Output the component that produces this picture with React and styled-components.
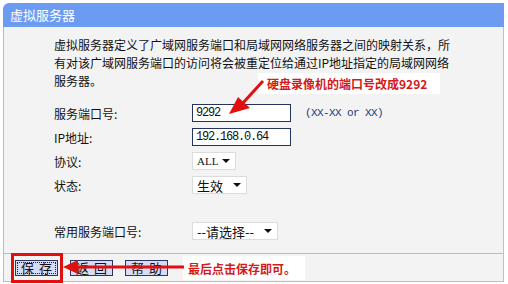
import React from 'react';
import styled, { createGlobalStyle } from 'styled-components';

const GlobalStyle = createGlobalStyle`
    html, body {
        margin: 0;
        background: #ffffff;
    }
    body {
        font-family: "Noto Sans CJK SC", "Noto Sans", sans-serif;
        color: #111;
    }
`;

const Page = styled.div`
    position: relative;
    width: 508px;
    height: 284px;
    padding: 3px 0 0 3px;
    box-sizing: border-box;
    overflow: hidden;
`;

const Frame = styled.div`
    width: 501px;
`;

const Header = styled.div`
    height: 24px;
    line-height: 24px;
    background: #6b9cf2;
    border-top-left-radius: 6px;
    color: #ffffff;
    font-size: 13px;
    padding-left: 7px;
`;

const Body = styled.div`
    background: #f3f3f4;
    border-left: 1px solid #eab85e;
    border-right: 1px solid #d9c27e;
    padding: 9px 0 10px 50px;
`;

const Intro = styled.div`
    font-size: 12px;
    line-height: 18px;
    margin-bottom: 11px;
    white-space: nowrap;
`;

const Row = styled.div`
    display: grid;
    grid-template-columns: 138px auto 1fr;
    align-items: center;
    height: 24px;
    margin-top: ${(props) => props.$gap ? '22px' : 0};
`;

const Label = styled.span`
    font-size: 12px;
`;

const TextInput = styled.div`
    width: 99px;
    height: 18px;
    box-sizing: border-box;
    border: 1px solid #23345f;
    background: #ffffff;
    font-family: "Liberation Mono", monospace;
    font-size: 12px;
    letter-spacing: -1.2px;
    line-height: 16px;
    padding-left: 3px;
`;

const Hint = styled.span`
    margin-left: 14px;
    font-family: "Liberation Mono", monospace;
    font-size: 11px;
    letter-spacing: -0.6px;
    color: #1f3a78;
`;

const Select = styled.div`
    width: ${(props) => props.$w}px;
    height: 18px;
    box-sizing: border-box;
    border: 1px solid #dcdcdc;
    background: #ffffff;
    display: flex;
    align-items: center;
    justify-content: space-between;
    padding: 0 5px 0 4px;
    font-size: ${(props) => props.$latin ? '11px' : '13px'};
    font-family: ${(props) => props.$latin ? '"Liberation Serif", serif' : '"Noto Sans CJK SC", sans-serif'};
`;

const Caret = styled.span`
    width: 0;
    height: 0;
    border-left: 4px solid transparent;
    border-right: 4px solid transparent;
    border-top: 4px solid #111;
`;

const Bar = styled.div`
    height: 27px;
    background: #f3f3f4;
    border: 1px solid #eab85e;
    border-right-color: #d9c27e;
    display: flex;
    align-items: center;
    gap: 12px;
    padding-left: 11px;
`;

const Button = styled.div`
    width: 43px;
    height: 16px;
    box-sizing: border-box;
    border: 1px solid #2a3566;
    background: #d6dcf6;
    font-size: 13px;
    line-height: 13px;
    text-align: center;
    letter-spacing: 5px;
    padding-left: 5px;
    outline: ${(props) => props.$focus ? '1px dotted #222' : 'none'};
    outline-offset: -3px;
`;

const Note = styled.div`
    position: absolute;
    left: ${(props) => props.$x}px;
    top: ${(props) => props.$y}px;
    width: ${(props) => props.$w}px;
    height: ${(props) => props.$h}px;
    background: #ffffff;
    color: #d41a1a;
    font-size: 12px;
    font-weight: 700;
    display: flex;
    align-items: center;
    padding-left: ${(props) => props.$pad}px;
    box-sizing: border-box;
`;

const RedBox = styled.div`
    position: absolute;
    left: 11px;
    top: 253px;
    width: 52px;
    height: 30px;
    box-sizing: border-box;
    border: 3px solid #e01010;
`;

const Overlay = styled.svg`
    position: absolute;
    left: 0;
    top: 0;
    pointer-events: none;
`;

const App = () => {
    return (
        <Page>
            <GlobalStyle />
            <Frame>
                <Header>虚拟服务器</Header>
                <Body>
                    <Intro>
                        虚拟服务器定义了广域网服务端口和局域网网络服务器之间的映射关系，所<br />
                        有对该广域网服务端口的访问将会被重定位给通过IP地址指定的局域网网络<br />
                        服务器。
                    </Intro>
                    <Row>
                        <Label>服务端口号:</Label>
                        <TextInput>9292</TextInput>
                        <Hint>(XX-XX or XX)</Hint>
                    </Row>
                    <Row>
                        <Label>IP地址:</Label>
                        <TextInput>192.168.0.64</TextInput>
                    </Row>
                    <Row>
                        <Label>协议:</Label>
                        <Select $w={44} $latin>ALL<Caret /></Select>
                    </Row>
                    <Row>
                        <Label>状态:</Label>
                        <Select $w={55}>生效<Caret /></Select>
                    </Row>
                    <Row $gap>
                        <Label>常用服务端口号:</Label>
                        <Select $w={86}>--请选择--<Caret /></Select>
                    </Row>
                </Body>
                <Bar>
                    <Button $focus>保存</Button>
                    <Button>返回</Button>
                    <Button>帮助</Button>
                </Bar>
            </Frame>

            <Note $x={258} $y={73} $w={182} $h={21} $pad={9}>硬盘录像机的端口号改成9292</Note>
            <Note $x={183} $y={256} $w={122} $h={24} $pad={5}>最后点击保存即可。</Note>
            <RedBox />
            <Overlay width="508" height="284" viewBox="0 0 508 284">
                <line x1="263" y1="81" x2="242" y2="104" stroke="#e01010" strokeWidth="3" />
                <polygon points="229,114 238,97 250,108" fill="#e01010" />
                <line x1="76" y1="267" x2="184" y2="267" stroke="#e01010" strokeWidth="3" />
                <polygon points="63,267 78,260 78,274" fill="#e01010" />
            </Overlay>
        </Page>
    );
};

export default App;
